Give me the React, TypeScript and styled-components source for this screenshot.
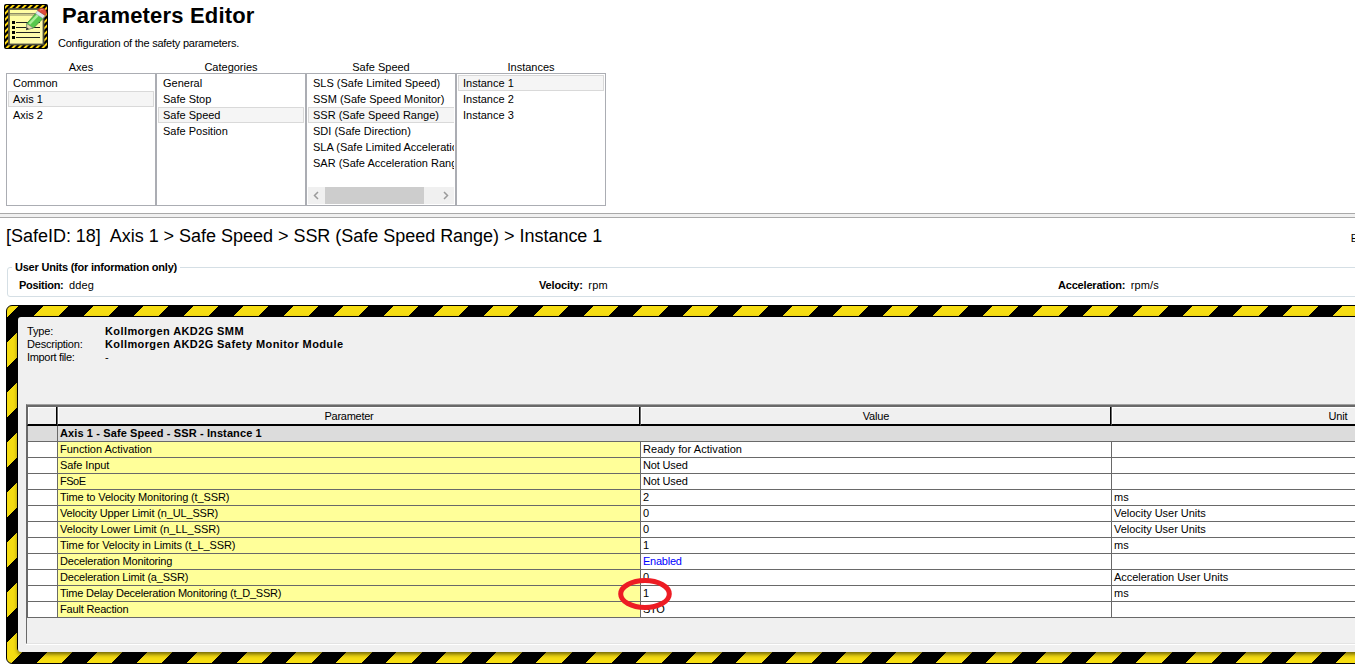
import React from 'react';
import styled, { createGlobalStyle } from 'styled-components';

const GlobalStyle = createGlobalStyle`
  * { box-sizing: border-box; }
  html, body { margin: 0; padding: 0; background: #fff; overflow: hidden; }
  body { font: 11px/16px "Liberation Sans", Arial, sans-serif; color: #000; }
`;

const Page = styled.div`
  width: 1355px;
  height: 670px;
  overflow: hidden;
  display: flex;
  flex-direction: column;
  white-space: pre;
`;

const Text = styled.span<{ $ls?: number; $bold?: boolean }>`
  letter-spacing: ${p => p.$ls ?? 0}px;
  font-weight: ${p => (p.$bold ? 700 : 400)};
`;

const Header = styled.header`
  display: flex;
  height: 59px;
  padding: 4px 0 0 4px;
`;

const HeaderIcon = styled.svg`
  width: 44px;
  height: 45px;
  flex: none;
`;

const HeaderText = styled.div`
  display: flex;
  flex-direction: column;
  padding-left: 10px;
`;

const Title = styled.h1`
  margin: -1px 0 0 4px;
  font-size: 22px;
  line-height: 26px;
  font-weight: 700;
  letter-spacing: 0.18px;
`;

const Subtitle = styled.p`
  margin: 6px 0 0;
  line-height: 16px;
  letter-spacing: -0.235px;
`;

const Lists = styled.section`
  display: flex;
  height: 154px;
  padding-left: 6px;
`;

const ListColumn = styled.div`
  display: flex;
  flex-direction: column;
  width: 150px;
`;

const ListTitle = styled.div`
  height: 14px;
  line-height: 16px;
  text-align: center;
`;

const ListBox = styled.div`
  display: flex;
  flex-direction: column;
  height: 133px;
  padding: 1px;
  border: 1px solid #abadb3;
`;

const ListItems = styled.div`
  flex: 1;
  overflow: hidden;
`;

const ListItem = styled.div<{ $selected?: boolean; $wide?: boolean }>`
  width: ${p => (p.$wide ? '170px' : 'auto')};
  height: 16px;
  padding-left: 4px;
  line-height: 14px;
  border: 1px solid ${p => (p.$selected ? '#d9d9d9' : 'transparent')};
  background: ${p => (p.$selected ? '#f5f5f5' : 'transparent')};
`;

const ScrollBar = styled.div`
  display: flex;
  height: 17px;
  background: #f0f0f0;
`;

const ScrollThumb = styled.div`
  width: 99px;
  background: #cdcdcd;
`;

const ScrollArrow = styled.svg`
  width: 17px;
  height: 17px;
  fill: none;
  stroke: #9a9a9a;
  stroke-width: 1.5;
`;

const Spacer = styled.div`
  flex: 1;
`;

const Splitter = styled.div`
  flex: none;
  height: 5px;
  border: 1px solid #a9a9a9;
  border-width: 1px 0;
  background: #f0f0f0;
`;

const Crumbs = styled.div`
  display: flex;
  justify-content: space-between;
  height: 44px;
  width: 1358px;
  padding: 6px 0 0 6px;
`;

const CrumbPath = styled.h2`
  margin: 0;
  font-size: 18px;
  line-height: 24px;
  font-weight: 400;
  letter-spacing: -0.022px;
`;

const CrumbAction = styled.span`
  line-height: 28px;
`;

const Units = styled.fieldset`
  flex: none;
  display: flex;
  flex-direction: column;
  width: 1370px;
  height: 35px;
  margin: 0 0 0 7px;
  padding: 0;
  border: 1px solid #d5dfe5;
  border-radius: 3px;
  min-width: 0;
`;

const UnitsLegend = styled.legend`
  margin-left: 4px;
  padding: 0 3px;
  height: 11px;
  line-height: 11px;
  font-weight: 700;
  letter-spacing: -0.221px;
`;

const UnitsRow = styled.div`
  display: grid;
  grid-template-columns: 520px 519px auto;
  padding: 4px 0 0 11px;
  line-height: 16px;
`;

const Unit = styled.div`
  display: flex;
  gap: 5.5px;
`;

const Hazard = styled.section`
  flex: none;
  width: 1400px;
  height: 359px;
  margin: 8px 0 0 6px;
  padding: 11px;
  border: 1px solid #000;
  border-radius: 6px;
  background: repeating-linear-gradient(
    135deg,
    #f5dc12 0 7.8px,
    #000 7.8px 25.46px,
    #f5dc12 25.46px 35.355px
  );
`;

const Panel = styled.div`
  height: 335px;
  padding: 8px 0 0 8px;
  border-radius: 3px;
  background: #f0f0f0;
  box-shadow: -1px -1px 0 #000, 0 2px 4px rgba(0, 0, 0, 0.6);
`;

const Info = styled.dl`
  display: grid;
  grid-template-columns: 78px auto;
  grid-auto-rows: 13px;
  height: 79px;
  margin: 0;
  padding-left: 1px;
  align-content: start;
  line-height: 13px;
`;

const InfoTerm = styled.dt``;

const InfoValue = styled.dd`
  margin: 0;
`;

const GridFrame = styled.div`
  height: 240px;
  border: 1px solid #696969;
  border-top-color: #a0a0a0;
  border-bottom-color: #e3e3e3;
  box-shadow: 0 1px 0 #fff;
`;

const GridTable = styled.div`
  display: grid;
  grid-template-columns: 31px 583px 471px 451px;
  border-top: 2px solid #696969;
`;

const HeadCell = styled.div<{ $last?: boolean; $first?: boolean }>`
  height: 19px;
  padding: 1px 0 0 1px;
  line-height: 16px;
  text-align: center;
  border-bottom: 2px solid #000;
  border-right: ${p => (p.$last ? 0 : 1)}px solid #000;
  border-left: 1px solid #696969;
  margin-right: ${p => (p.$last ? 0 : 1)}px;
  margin-left: ${p => (p.$first ? 0 : -1)}px;
  box-shadow: inset 1px 1px 0 #fff;
`;

const SectionMark = styled.div`
  height: 16px;
  background: #dcdcdc;
  border: 1px solid #696969;
  border-top: 0;
`;

const SectionCell = styled.div`
  grid-column: 2 / -1;
  height: 16px;
  padding-left: 2px;
  line-height: 15px;
  background: #dcdcdc;
  border-bottom: 1px solid #696969;
`;

const Cell = styled.div<{ $tone?: 'name' | 'link'; $mark?: boolean }>`
  height: 16px;
  padding-left: 2px;
  line-height: 15px;
  color: ${p => (p.$tone === 'link' ? '#0000ff' : '#000')};
  background: ${p => (p.$tone === 'name' ? '#ffff99' : '#fff')};
  border-right: 1px solid #696969;
  border-bottom: 1px solid #696969;
  border-left: ${p => (p.$mark ? '1px solid #696969' : '0')};
`;

const ValueAnchor = styled.span<{ $raised?: boolean }>`
  position: relative;
  z-index: ${p => (p.$raised ? 1 : 'auto')};
`;

const Marker = styled.svg`
  position: absolute;
  left: -26px;
  top: -11px;
  width: 56px;
  height: 36px;
  fill: none;
  stroke: #ed1c24;
  stroke-width: 5;
`;

interface ListData {
  title: string;
  items: string[];
  selected: number;
  scroll?: boolean;
}

const lists: ListData[] = [
  { title: 'Axes', items: ['Common', 'Axis 1', 'Axis 2'], selected: 1 },
  { title: 'Categories', items: ['General', 'Safe Stop', 'Safe Speed', 'Safe Position'], selected: 2 },
  {
    title: 'Safe Speed',
    items: [
      'SLS (Safe Limited Speed)',
      'SSM (Safe Speed Monitor)',
      'SSR (Safe Speed Range)',
      'SDI (Safe Direction)',
      'SLA (Safe Limited Acceleration)',
      'SAR (Safe Acceleration Range)',
    ],
    selected: 2,
    scroll: true,
  },
  { title: 'Instances', items: ['Instance 1', 'Instance 2', 'Instance 3'], selected: 0 },
];

interface Param {
  name: string;
  ls: number;
  value: string;
  valueLs?: number;
  unit?: string;
  link?: boolean;
  marked?: boolean;
}

const params: Param[] = [
  { name: 'Function Activation', ls: -0.02, value: 'Ready for Activation', valueLs: 0.06 },
  { name: 'Safe Input', ls: -0.08, value: 'Not Used', valueLs: -0.15 },
  { name: 'FSoE', ls: -0.5, value: 'Not Used', valueLs: -0.15 },
  { name: 'Time to Velocity Monitoring (t_SSR)', ls: -0.13, value: '2', unit: 'ms' },
  { name: 'Velocity Upper Limit (n_UL_SSR)', ls: -0.145, value: '0', unit: 'Velocity User Units' },
  { name: 'Velocity Lower Limit (n_LL_SSR)', ls: -0.03, value: '0', unit: 'Velocity User Units' },
  { name: 'Time for Velocity in Limits (t_L_SSR)', ls: -0.09, value: '1', unit: 'ms' },
  { name: 'Deceleration Monitoring', ls: -0.17, value: 'Enabled', valueLs: -0.25, link: true },
  { name: 'Deceleration Limit (a_SSR)', ls: -0.195, value: '0', unit: 'Acceleration User Units' },
  { name: 'Time Delay Deceleration Monitoring (t_D_SSR)', ls: -0.215, value: '1', unit: 'ms', marked: true },
  { name: 'Fault Reaction', ls: -0.18, value: 'STO', valueLs: -0.3 },
];

function EditorIcon() {
  return (
    <HeaderIcon viewBox="0 0 44 45">
      <defs>
        <pattern id="hazard" width="6" height="6" patternUnits="userSpaceOnUse">
          <rect width="6" height="6" fill="#000" />
          <path d="M0 3.2L3.2 0H6L0 6zM6 6V3.2L3.2 6z" fill="#ffd90f" />
        </pattern>
        <linearGradient id="paper" x1="0" y1="0" x2="1" y2="1">
          <stop offset="0" stopColor="#ffffa0" />
          <stop offset="1" stopColor="#fff9b0" />
        </linearGradient>
      </defs>
      <rect width="44" height="45" rx="2" fill="#000" />
      <rect x="1" y="1" width="42" height="43" rx="1.5" fill="url(#hazard)" />
      <rect x="5" y="5" width="34.500" height="35.500" fill="url(#paper)" stroke="#4d4d3c" strokeWidth="1.800" />
      <path d="M6 9.500h33M6 11h33" stroke="#8d8c66" strokeWidth="1" />
      <path d="M8 17h3v3H8zM8 22h3v3H8zM8 27h3v3H8zM8 32h3v3H8z" fill="#000" />
      <path d="M12 18.500h24M12 23.500h24M12 28.500h24M12 33.500h24" stroke="#222" strokeWidth="1.200" />
      <path d="M22.700 25.500L22.800 19.500 32 9l7.500 5L29.500 24z" fill="#58c84c" stroke="#3c8a3a" strokeWidth="0.800" />
      <path d="M25.300 20L34.500 10.300" stroke="#a9ee98" strokeWidth="2.400" />
      <path d="M22.500 25.700l.5-6 6 4.300z" fill="#ecdcae" stroke="#777" strokeWidth="0.500" />
      <path d="M22 26.200l.6-3 2.400 1.800z" fill="#333" />
      <path d="M31.500 9.500l2.500-3.200 7.300 5-2.400 3.200z" fill="#dfe6ee" stroke="#8d99a8" strokeWidth="0.500" />
      <path d="M33.600 6.600C35 3.800 38.500 3.600 40.500 5.100s2.700 4.200.8 6.400z" fill="#de4a3c" stroke="#a63328" strokeWidth="0.600" />
      <path d="M36 6.300c1-1 2.300-1 3.200-.5" stroke="#f49a8c" strokeWidth="1" fill="none" />
    </HeaderIcon>
  );
}

function SelectionList({ list }: { list: ListData }) {
  return (
    <ListColumn>
      <ListTitle>{list.title}</ListTitle>
      <ListBox>
        <ListItems>
          {list.items.map((item, i) => (
            <ListItem key={item} $selected={i === list.selected} $wide={list.scroll}>
              {item}
            </ListItem>
          ))}
        </ListItems>
        {list.scroll && (
          <ScrollBar>
            <ScrollArrow viewBox="0 0 17 17"><path d="M10 5L6.500 8.500 10 12" /></ScrollArrow>
            <ScrollThumb />
            <Spacer />
            <ScrollArrow viewBox="0 0 17 17"><path d="M7 5l3.500 3.500L7 12" /></ScrollArrow>
          </ScrollBar>
        )}
      </ListBox>
    </ListColumn>
  );
}

function ParamRow({ p }: { p: Param }) {
  return (
    <>
      <Cell $mark />
      <Cell $tone="name"><Text $ls={p.ls}>{p.name}</Text></Cell>
      <Cell $tone={p.link ? 'link' : undefined}>
        <ValueAnchor $raised={p.marked}>
          <Text $ls={p.valueLs}>{p.value}</Text>
          {p.marked && (
            <Marker viewBox="0 0 56 36"><ellipse cx="28" cy="18" rx="24.300" ry="13.500" /></Marker>
          )}
        </ValueAnchor>
      </Cell>
      <Cell><Text $ls={-0.03}>{p.unit}</Text></Cell>
    </>
  );
}

export default function App() {
  return (
    <Page>
      <GlobalStyle />
      <Header>
        <EditorIcon />
        <HeaderText>
          <Title>Parameters Editor</Title>
          <Subtitle>Configuration of the safety parameters.</Subtitle>
        </HeaderText>
      </Header>
      <Lists>
        {lists.map(l => <SelectionList key={l.title} list={l} />)}
      </Lists>
      <Splitter />
      <Crumbs>
        <CrumbPath>{'[SafeID: 18]  Axis 1 > Safe Speed > SSR (Safe Speed Range) > Instance 1'}</CrumbPath>
        <CrumbAction>E</CrumbAction>
      </Crumbs>
      <Units>
        <UnitsLegend>User Units (for information only)</UnitsLegend>
        <UnitsRow>
          <Unit><Text $bold $ls={-0.285}>Position:</Text><Text $ls={0.1}>ddeg</Text></Unit>
          <Unit><Text $bold $ls={-0.16}>Velocity:</Text><Text $ls={0.2}>rpm</Text></Unit>
          <Unit><Text $bold $ls={-0.19}>Acceleration:</Text><Text $ls={0.1}>rpm/s</Text></Unit>
        </UnitsRow>
      </Units>
      <Hazard>
        <Panel>
          <Info>
            <InfoTerm><Text $ls={-0.18}>Type:</Text></InfoTerm>
            <InfoValue><Text $bold $ls={0.4}>Kollmorgen AKD2G SMM</Text></InfoValue>
            <InfoTerm><Text $ls={-0.215}>Description:</Text></InfoTerm>
            <InfoValue><Text $bold $ls={0.4}>Kollmorgen AKD2G Safety Monitor Module</Text></InfoValue>
            <InfoTerm><Text $ls={-0.322}>Import file:</Text></InfoTerm>
            <InfoValue>-</InfoValue>
          </Info>
          <GridFrame>
            <GridTable>
              <HeadCell $first />
              <HeadCell><Text $ls={-0.262}>Parameter</Text></HeadCell>
              <HeadCell><Text $ls={-0.166}>Value</Text></HeadCell>
              <HeadCell $last><Text $ls={-0.141}>Unit</Text></HeadCell>
              <SectionMark />
              <SectionCell><Text $bold $ls={0.115}>Axis 1 - Safe Speed - SSR - Instance 1</Text></SectionCell>
              {params.map(p => <ParamRow key={p.name} p={p} />)}
            </GridTable>
          </GridFrame>
        </Panel>
      </Hazard>
    </Page>
  );
}
